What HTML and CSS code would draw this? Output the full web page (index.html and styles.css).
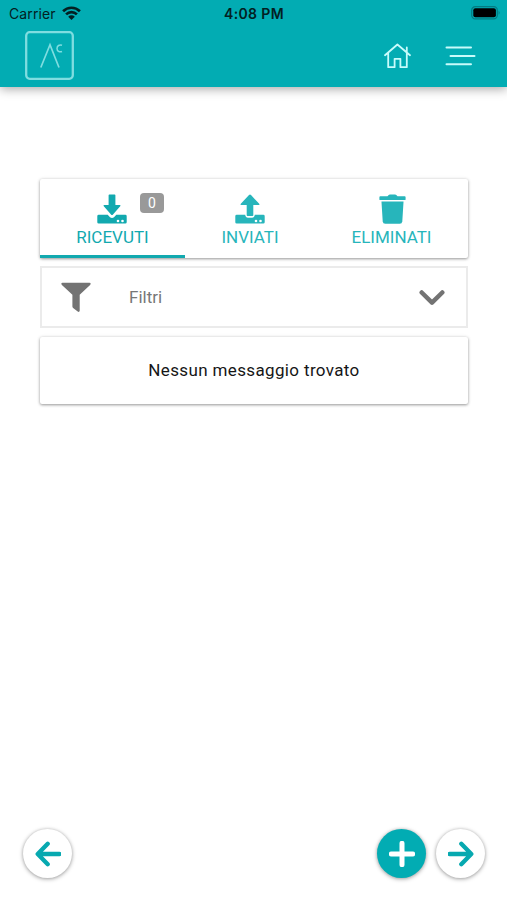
FILE: index.html
```html
<!DOCTYPE html>
<html lang="it">
<head>
<meta charset="utf-8">
<title>Messaggi</title>
<link rel="stylesheet" href="styles.css">
</head>
<body>
<header class="header">
  <div class="status">
    <div class="carrier"><span>Carrier</span>
      <svg width="19" height="14" viewBox="0 0 19 14"><g fill="none" stroke="#032022" stroke-width="2.7"><path d="M1.1 5.2a12 12 0 0 1 16.8 0"/><path d="M4.1 8.4a7.7 7.7 0 0 1 10.8 0"/></g><path fill="#032022" d="M6.2 10.7a4.6 4.6 0 0 1 6.6 0L9.5 14z"/></svg>
    </div>
    <div class="time">4:08 PM</div>
    <svg class="battery" width="30" height="14" viewBox="0 0 30 14"><rect x=".7" y=".7" width="25.6" height="12.2" rx="3.6" fill="none" stroke="#037c82" stroke-width="1.2"/><rect x="2.3" y="2.3" width="22.6" height="9" rx="2" fill="#000"/><path d="M27.6 4.8q2 2 0 4z" fill="#037c82"/></svg>
  </div>
  <nav class="nav">
    <svg class="logo" width="49" height="49" viewBox="0 0 49 49" fill="none" stroke="#7fdde0"><rect x="1.2" y="1.2" width="46.6" height="46.6" rx="3.5" stroke-width="2.3"/><path d="M15.8 36.5 25 13.8l9 22.7" stroke-width="1.7"/><path d="M37 14.3c-2.6-1.1-5 .6-5 3.1s2.4 4.2 5 3.1" stroke-width="1.5"/></svg>
    <div class="nav-actions">
      <svg width="27" height="26" viewBox="0 0 27 26" fill="none" stroke="#c8fbfb" stroke-width="1.8" stroke-linejoin="round" stroke-linecap="round"><path d="M1 12.2 13.4 1.5 26 12.2M4.2 10v14.2h6.4v-8.400h5.800v8.400h6.400V10M22.800 8.800V4.500"/></svg>
      <svg width="31" height="20" viewBox="0 0 31 20" stroke="#c8fbfb" stroke-width="2" stroke-linecap="round"><path d="M1.500 1.500h24.500M5.500 9.900h24M1.500 18.200h24.500"/></svg>
    </div>
  </nav>
</header>
<main class="content">
  <div class="card tabs">
    <div class="tab active">
      <div class="tab-icon">
        <svg width="30" height="30" viewBox="0 0 30 30" fill="currentColor"><path d="M12.400.500h5.200q.8 0 .8.800V11h4.200q1.600 0 .6 1.200l-7.200 8.300q-1 1-2 0l-7.200-8.300Q5.800 11 7.400 11h4.200V1.300q0-.8.800-.8z"/><path d="M1.700 20.800h9l2.300 2.400q2 1.600 4 0l2.300-2.400h9q1.400 0 1.400 1.400v6q0 1.400-1.400 1.400H1.700Q.3 29.600.3 28.200v-6q0-1.400 1.400-1.400z"/><circle cx="21" cy="27" r="1.300" fill="#fff"/><circle cx="25.500" cy="27" r="1.300" fill="#fff"/></svg>
        <span class="badge">0</span>
      </div>
      <span>RICEVUTI</span>
    </div>
    <div class="tab">
      <div class="tab-icon"><svg width="30" height="30" viewBox="0 0 30 30" fill="currentColor"><path d="M12.500 22q-.8 0-.8-.8V11H6.400q-1.600 0-.6-1.200l8.200-8.700q1-1 2 0l8.200 8.700q1 1.200-.6 1.200h-5.300v10.200q0 .8-.8.800z"/><path d="M1.700 20.800h8.500q.4 2.900 2.800 2.900h4q2.400 0 2.800-2.900h8.500q1.400 0 1.400 1.400v6q0 1.400-1.400 1.400H1.700Q.3 29.600.3 28.200v-6q0-1.400 1.400-1.400z"/><circle cx="21" cy="27" r="1.300" fill="#fff"/><circle cx="25.500" cy="27" r="1.300" fill="#fff"/></svg></div>
      <span>INVIATI</span>
    </div>
    <div class="tab">
      <div class="tab-icon"><svg class="trash" width="27" height="30" viewBox="0 0 27 30" fill="currentColor"><path d="M1.300 2.300H8.500L9.700 1q.5-.6 1.200-.6h5.200q.7 0 1.200.6l1.200 1.300h7.200q.9 0 .9.900v2.200q0 .6-.9.600H1.300q-.9 0-.9-.6V3.200q0-.9.900-.9z"/><path d="M2.500 7.500h22L23.300 27.200q-.2 2.600-2.600 2.600H6.300q-2.400 0-2.600-2.600z"/></svg></div>
      <span>ELIMINATI</span>
    </div>
  </div>
  <div class="filter">
    <svg width="30" height="31" viewBox="0 0 30 31" fill="#737373"><path d="M1.500.700h27q2 .4.600 2.400L18.700 12.800v16q-.3 1.800-2 .8l-4.600-3.500q-.7-.6-.7-1.500V12.800L.9 3.100Q-.5 1.100 1.500.700z"/></svg>
    <span>Filtri</span>
    <svg class="chevron" width="26" height="17" viewBox="0 0 26 17" fill="none" stroke="#737373" stroke-width="4.500" stroke-linecap="round" stroke-linejoin="round"><path d="M2.700 3.500 13 13.600 23.300 3.500"/></svg>
  </div>
  <div class="card empty">Nessun messaggio trovato</div>
</main>
<footer class="footer">
  <div class="fab"><svg width="26" height="26" viewBox="0 0 26 26"><path d="M12.700 2.700 2.700 13l10 10.300M3 13h21.500"/></svg></div>
  <div class="footer-right">
    <div class="fab add"><svg width="26" height="26" viewBox="0 0 26 26"><path d="M13 2.300v21.400M2.300 13h21.400"/></svg></div>
    <div class="fab"><svg width="26" height="26" viewBox="0 0 26 26"><path d="M13.300 2.700 23.300 13l-10 10.300M23 13H1.500"/></svg></div>
  </div>
</footer>
</body>
</html>
```
FILE: styles.css
```css
* { box-sizing: border-box; }
body {
  margin: 0;
  height: 900px;
  display: flex;
  flex-direction: column;
  background: #fff;
  font-family: Roboto, sans-serif;
  overflow: hidden;
}
svg { display: block; flex: none; }
.header {
  height: 87px;
  background: #02acb3;
  box-shadow: 0 2px 10px rgba(0, 0, 0, .35);
}
.status {
  height: 28px;
  padding: 0 6px 2px;
  padding-left: 9px;
  display: grid;
  grid-template-columns: 1fr auto 1fr;
  align-items: center;
  font-family: Inter, sans-serif;
  font-size: 14px;
  color: #032022;
}
.carrier { display: flex; align-items: center; gap: 6px; letter-spacing: .1px; }
.time { font-weight: 600; letter-spacing: .35px; margin-left: -2px; }
.battery { justify-self: end; }
.nav {
  display: flex;
  justify-content: space-between;
  padding: 3px 31px 0 25px;
}
.nav-actions { display: flex; align-items: center; gap: 34px; }
.content { padding: 92px 39px 0 40px; }
.card {
  background: #fff;
  border-radius: 2px;
  box-shadow: 0 1px 3px rgba(0, 0, 0, .38), 0 0 4px rgba(0, 0, 0, .08);
}
.tabs {
  height: 79px;
  display: grid;
  grid-template-columns: 145px 130px 153px;
}
.tab {
  display: flex;
  flex-direction: column;
  align-items: center;
  padding-top: 15px;
  color: #27b5bb;
  font-size: 17px;
  line-height: 20px;
}
.tab.active { color: #12a9af; border-bottom: 3px solid #12a9af; }
.tab-icon { height: 33px; position: relative; }
.tab.active svg { margin-left: -1px; }
.trash { margin-left: 2px; }
.badge {
  position: absolute;
  left: 42px;
  top: -1px;
  width: 24px;
  height: 20px;
  border-radius: 4px;
  background: #999;
  color: #fff;
  font-size: 14px;
  text-align: center;
}
.filter {
  height: 62px;
  margin: 8px 0 9px;
  padding: 0 21px 0 19px;
  display: flex;
  align-items: center;
  border: 2px solid #ebebeb;
  color: #777;
  font-size: 17px;
}
.filter span { margin-left: 38px; }
.chevron { margin-left: auto; }
.empty {
  height: 67px;
  line-height: 67px;
  text-align: center;
  font-size: 17px;
  letter-spacing: .36px;
  color: #161616;
}
.footer {
  margin-top: auto;
  padding: 0 22px 22px 23px;
  display: flex;
  justify-content: space-between;
}
.footer-right { display: flex; gap: 10px; }
.fab {
  width: 49px;
  height: 49px;
  border-radius: 50%;
  display: flex;
  align-items: center;
  justify-content: center;
  background: #fff;
  box-shadow: 0 1px 4px rgba(0, 0, 0, .36), 0 0 3px rgba(0, 0, 0, .1);
}
.fab path {
  fill: none;
  stroke: #07a9b0;
  stroke-width: 4.3;
  stroke-linecap: round;
  stroke-linejoin: round;
}
.fab.add { background: #02acb3; }
.fab.add path { stroke: #fff; stroke-width: 5; }
```
